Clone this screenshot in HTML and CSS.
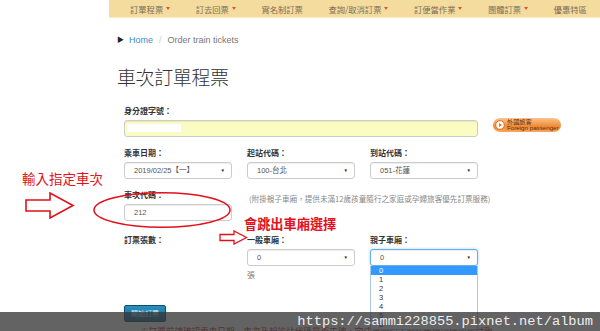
FILE: index.html
```html
<!DOCTYPE html>
<html>

<head>
	<title>車次訂單程票</title>
	<meta charset="utf-8">
	<link rel="stylesheet" href="styles.css">
</head>

<body>

	<div class="topnav">
		<span class="nav_item">訂單程票<i class="caret"></i></span>
		<span class="nav_item">訂去回票<i class="caret"></i></span>
		<span class="nav_item">實名制訂票</span>
		<span class="nav_item">查詢/取消訂票<i class="caret"></i></span>
		<span class="nav_item">訂便當作業<i class="caret"></i></span>
		<span class="nav_item">團體訂票<i class="caret"></i></span>
		<span class="nav_item">優惠特區</span>
	</div>

	<div class="page">
		<div class="crumbs">
			<span class="crumb_arrow">▶</span>
			<a class="crumb_link">Home</a>
			<span class="crumb_sep">/</span>
			<span class="crumb_here">Order train tickets</span>
		</div>

		<h1 class="page_title">車次訂單程票</h1>

		<form class="order_form" action="" method="">
			<div class="form_row">
				<div class="field span3">
					<div class="field_label">身分證字號：</div>
					<div class="text_box id_box"><span class="id_mask"></span></div>
				</div>
				<div class="foreign_btn">
					<span class="play_icon"><svg width="10" height="10" viewBox="0 0 10 10"><circle cx="5" cy="5" r="4.3" fill="#fff" stroke="#e9701d" stroke-width="1"/><path d="M4 3 L7 5 L4 7 Z" fill="#e9701d"/></svg></span>
					<span class="foreign_text"><span>外國旅客</span><span>Foreign passenger</span></span>
				</div>
			</div>

			<div class="form_row row_gap">
				<div class="field">
					<div class="field_label">乘車日期：</div>
					<div class="select_box">2019/02/25【一】<i class="sel_caret">▼</i></div>
				</div>
				<div class="field">
					<div class="field_label">起站代碼：</div>
					<div class="select_box">100-台北<i class="sel_caret">▼</i></div>
				</div>
				<div class="field">
					<div class="field_label">到站代碼：</div>
					<div class="select_box">051-花蓮<i class="sel_caret">▼</i></div>
				</div>
			</div>

			<div class="form_row row_gap">
				<div class="field">
					<div class="field_label">車次代碼：</div>
					<div class="text_box">212</div>
				</div>
				<div class="note span2">(附掛親子車廂，提供未滿12歲孩童隨行之家庭或孕婦旅客優先訂票服務)</div>
			</div>

			<div class="form_row count_row">
				<div class="field">
					<div class="field_label">訂票張數：</div>
				</div>
				<div class="field">
					<div class="field_label">一般車廂：</div>
					<div class="select_box">0<i class="sel_caret">▼</i></div>
					<div class="unit">張</div>
				</div>
				<div class="field drop_field">
					<div class="field_label">親子車廂：</div>
					<div class="select_box focused">0<i class="sel_caret">▼</i></div>
					<ul class="drop_list">
						<li class="picked">0</li>
						<li>1</li>
						<li>2</li>
						<li>3</li>
						<li>4</li>
						<li>5</li>
						<li>6</li>
					</ul>
				</div>
			</div>

			<div class="submit_row">
				<span class="go_btn">開始訂票</span>
			</div>
			<div class="warn_line">※訂票前請確認乘車日期、車次及起訖站代碼是否正確，完成後請記下電腦代碼以便取票付款</div>
		</form>
	</div>

	<!-- notes drawn over the screenshot -->
	<div class="mark mark_text1">輸入指定車次</div>
	<svg class="mark mark_arrow1" width="50" height="27" viewBox="0 0 50 27">
		<path d="M1 8 H25 V1 L48 13.5 L25 26 V19 H1 Z" fill="#fff" stroke="#e3101b" stroke-width="1.6" stroke-linejoin="miter"/>
	</svg>
	<svg class="mark mark_ring" width="140" height="38" viewBox="0 0 140 38">
		<ellipse cx="70" cy="19" rx="68" ry="17.3" fill="none" stroke="#e3101b" stroke-width="1.5"/>
	</svg>
	<div class="mark mark_text2">會跳出車廂選擇</div>
	<svg class="mark mark_arrow2" width="29" height="15" viewBox="0 0 29 15">
		<path d="M1 4.5 H15 V1 L27.5 7.5 L15 14 V10.5 H1 Z" fill="#fff" stroke="#e3101b" stroke-width="1.3"/>
	</svg>

	<div class="watermark">https://sammi228855.pixnet.net/album</div>

</body>

</html>
```

FILE: styles.css
```css
body {
	margin: 0;
	background: #fff;
	font-family: "Liberation Sans", "Noto Sans CJK TC", sans-serif;
	color: #333;
	position: relative;
	height: 331px;
	overflow: hidden;
}

.topnav {
	margin-left: 109px;
	height: 18px;
	background: #f4dc9e;
	border-bottom: 1px solid #fbeccb;
	box-sizing: border-box;
	display: flex;
	align-items: center;
	padding-left: 21px;
	gap: 25.5px;
	font-family: "Noto Sans CJK TC", sans-serif;
	font-size: 8.3px;
	color: #7d6e57;
	white-space: nowrap;
}

.nav_item {
	display: flex;
	align-items: center;
}

.caret {
	display: inline-block;
	width: 0;
	height: 0;
	margin-left: 3px;
	border-left: 2.5px solid transparent;
	border-right: 2.5px solid transparent;
	border-top: 3px solid #e0542a;
}

.page {
	padding-left: 117px;
}

.crumbs {
	margin-top: 16px;
	height: 12px;
	line-height: 12px;
	font-size: 9px;
	display: flex;
	gap: 5px;
	align-items: center;
}

.crumb_arrow {
	font-size: 7px;
	color: #222;
}

.crumb_link {
	color: #428bca;
}

.crumb_sep {
	color: #ccc;
	margin: 0 1px;
}

.crumb_here {
	color: #777;
}

.page_title {
	margin: 19px 0 0 0;
	font-family: "Noto Sans CJK TC", sans-serif;
	font-weight: 300;
	font-size: 19px;
	line-height: 24px;
	color: #333;
	letter-spacing: -0.4px;
}

.order_form {
	margin-top: 17px;
	padding-left: 7px;
	font-family: "Liberation Sans", "Noto Sans CJK TC", sans-serif;
}

.form_row {
	display: grid;
	grid-template-columns: 108px 108px 108px auto;
	column-gap: 15px;
	align-items: start;
}

.row_gap {
	margin-top: 11px;
}

.count_row {
	margin-top: 14px;
}

.span3 {
	grid-column: span 3;
}

.span2 {
	grid-column: span 2;
}

.field_label {
	font-family: "Noto Sans CJK TC", sans-serif;
	font-size: 8px;
	font-weight: 700;
	line-height: 10px;
	height: 10px;
	color: #333;
	margin-bottom: 4px;
	white-space: nowrap;
}

.text_box {
	height: 17px;
	box-sizing: border-box;
	border: 1px solid #ccc;
	border-radius: 3px;
	background: #fff;
	box-shadow: inset 0 1px 1px rgba(0, 0, 0, 0.075);
	font-size: 7.5px;
	line-height: 15px;
	padding-left: 9px;
	color: #555;
}

.id_box {
	background: #fafcc2;
	padding-left: 2px;
	padding-top: 3px;
}

.id_mask {
	display: block;
	width: 54px;
	height: 8px;
	background: #fff;
}

.select_box {
	position: relative;
	height: 17px;
	box-sizing: border-box;
	border: 1px solid #ccc;
	border-radius: 3px;
	background: #fff;
	box-shadow: inset 0 1px 1px rgba(0, 0, 0, 0.075);
	font-family: "Liberation Sans", "Noto Sans CJK TC", sans-serif;
	font-size: 7.5px;
	line-height: 15px;
	padding-left: 9px;
	color: #555;
	white-space: nowrap;
}

.select_box.focused {
	border-color: #66afe9;
	box-shadow: inset 0 1px 1px rgba(0, 0, 0, 0.075), 0 0 3px rgba(102, 175, 233, 0.6);
}

.sel_caret {
	position: absolute;
	right: 6px;
	top: 0;
	font-style: normal;
	font-size: 4.5px;
	color: #222;
}

.foreign_btn {
	margin-top: 12px;
	width: 68px;
	height: 14px;
	border-radius: 7px;
	background: linear-gradient(#fcc48e, #f08a35 60%, #f6a560);
	display: flex;
	align-items: center;
	gap: 2px;
	padding-left: 2px;
	box-sizing: border-box;
	overflow: hidden;
}

.play_icon {
	display: flex;
}

.foreign_text {
	display: flex;
	flex-direction: column;
	font-size: 6.2px;
	line-height: 6px;
	color: #5a2c0a;
	white-space: nowrap;
}

.note {
	margin-top: 4px;
	font-family: "Noto Sans CJK TC", sans-serif;
	font-size: 7.6px;
	line-height: 9px;
	color: #888;
	white-space: nowrap;
	padding-left: 2px;
}

.unit {
	margin-top: 4px;
	font-family: "Noto Sans CJK TC", sans-serif;
	font-size: 8px;
	line-height: 10px;
	color: #777;
}

.drop_field {
	position: relative;
}

.drop_list {
	position: absolute;
	left: 0;
	top: 31px;
	width: 108px;
	box-sizing: border-box;
	margin: 0;
	padding: 0;
	list-style: none;
	background: #fff;
	border: 1px solid #a9c8e8;
	border-top: none;
	font-size: 7.5px;
	line-height: 9px;
	color: #333;
	z-index: 2;
}

.drop_list li {
	padding-left: 8px;
	height: 9px;
}

.drop_list li.picked {
	background: #3399ff;
	color: #fff;
}

.submit_row {
	margin-top: 25px;
	height: 17px;
}

.go_btn {
	display: inline-block;
	width: 42px;
	height: 17px;
	box-sizing: border-box;
	border-radius: 2px;
	border: 1px solid #0b4f6e;
	background: linear-gradient(#2c8fbf, #0c6690);
	color: #d4e8f2;
	font-family: "Noto Sans CJK TC", sans-serif;
	font-size: 7px;
	line-height: 15px;
	text-align: center;
	vertical-align: top;
}

.warn_line {
	margin-top: 4px;
	padding-left: 16px;
	font-family: "Noto Sans CJK TC", sans-serif;
	font-size: 8.6px;
	line-height: 10px;
	color: #b0161b;
	white-space: nowrap;
}

.mark {
	position: absolute;
	z-index: 3;
}

.mark_text1 {
	left: 22px;
	top: 169px;
	font-family: "Noto Sans CJK TC", sans-serif;
	font-size: 13.5px;
	line-height: 18px;
	color: #e3101b;
}

.mark_arrow1 {
	left: 25px;
	top: 192px;
}

.mark_ring {
	left: 92px;
	top: 191px;
}

.mark_text2 {
	left: 244px;
	top: 215px;
	font-family: "Noto Sans CJK TC", sans-serif;
	font-size: 13.2px;
	line-height: 17px;
	color: #e3101b;
	font-weight: 700;
}

.mark_arrow2 {
	left: 219px;
	top: 230px;
}

.watermark {
	position: absolute;
	left: 0;
	right: 0;
	top: 312px;
	height: 19px;
	background: rgba(55, 55, 55, 0.78);
	z-index: 5;
	text-align: right;
	padding-right: 7px;
	font-family: "Liberation Mono", monospace;
	font-size: 13.7px;
	line-height: 19px;
	color: #eee;
}
```
